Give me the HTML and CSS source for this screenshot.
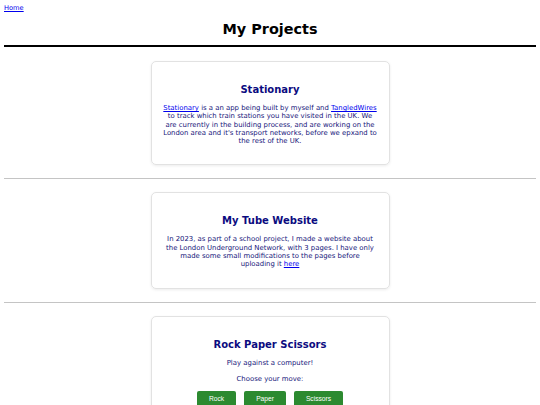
FILE: index.html
```html
<!DOCTYPE html>
<html lang="en">
<head>
<meta charset="utf-8">
<title>My Projects</title>
<link rel="stylesheet" href="styles.css">
</head>
<body>
<nav class="nav"><a href="#">Home</a></nav>
<h1 class="page-title">My Projects</h1>
<hr class="rule-main">
<section class="section section-first">
  <div class="card">
    <h2 class="card-title">Stationary</h2>
    <p class="card-text"><a href="#">Stationary</a> is a an app being built by myself and <a href="#">TangledWires</a> to track which train stations you have visited in the UK. We are currently in the building process, and are working on the London area and it's transport networks, before we epxand to the rest of the UK.</p>
  </div>
</section>
<hr class="rule">
<section class="section">
  <div class="card">
    <h2 class="card-title">My Tube Website</h2>
    <p class="card-text">In 2023, as part of a school project, I made a website about the London Underground Network, with 3 pages. I have only made some small modifications to the pages before uploading it <a href="#">here</a></p>
  </div>
</section>
<hr class="rule">
<section class="section">
  <div class="card">
    <h2 class="card-title">Rock Paper Scissors</h2>
    <p class="card-line">Play against a computer!</p>
    <p class="card-line">Choose your move:</p>
    <div class="buttons">
      <button class="btn">Rock</button>
      <button class="btn">Paper</button>
      <button class="btn">Scissors</button>
    </div>
  </div>
</section>
</body>
</html>
```

FILE: styles.css
```css
html, body {
  background: #ffffff;
}
body {
  margin: 4px;
  font-family: "DejaVu Sans", Verdana, sans-serif;
  color: #000;
}
a {
  color: #0000ee;
}
.nav {
  font-size: 6.67px;
  line-height: 8px;
  height: 8px;
}
.page-title {
  margin: 7px 0 0;
  font-size: 14.4px;
  line-height: 20px;
  text-align: center;
  font-weight: bold;
}
.rule-main {
  margin: 6px 0 0;
  border: none;
  border-top: 2px solid #000;
  height: 0;
}
.rule {
  margin: 0;
  border: none;
  border-top: 1px solid #c4c4c4;
  height: 0;
}
.section {
  display: flex;
  justify-content: center;
  padding: 13px 0 13px;
}
.section-first {
  padding-top: 14px;
}
.card {
  width: 239px;
  box-sizing: border-box;
  border: 1px solid #e2e2e2;
  border-radius: 5px;
  box-shadow: 0 1px 3px rgba(0,0,0,0.08);
  padding: 21px 11px 19px;
  display: flex;
  flex-direction: column;
  align-items: center;
  color: #15157a;
}
.card-title {
  margin: 0 0 8px;
  font-size: 10px;
  line-height: 13px;
  color: #0b0b80;
  font-weight: bold;
}
.card-text {
  margin: 0;
  font-size: 6.9px;
  line-height: 8.3px;
  text-align: center;
}
.card-line {
  margin: 0 0 8px;
  font-size: 6.9px;
  line-height: 8px;
  text-align: center;
}
.buttons {
  display: flex;
  gap: 8px;
  margin-top: 0;
}
.btn {
  font-family: "Liberation Sans", Arial, sans-serif;
  font-size: 6.67px;
  color: #ffffff;
  background: #2c8a30;
  border: none;
  border-radius: 2px;
  padding: 4px 12px;
  line-height: 8px;
}
```
